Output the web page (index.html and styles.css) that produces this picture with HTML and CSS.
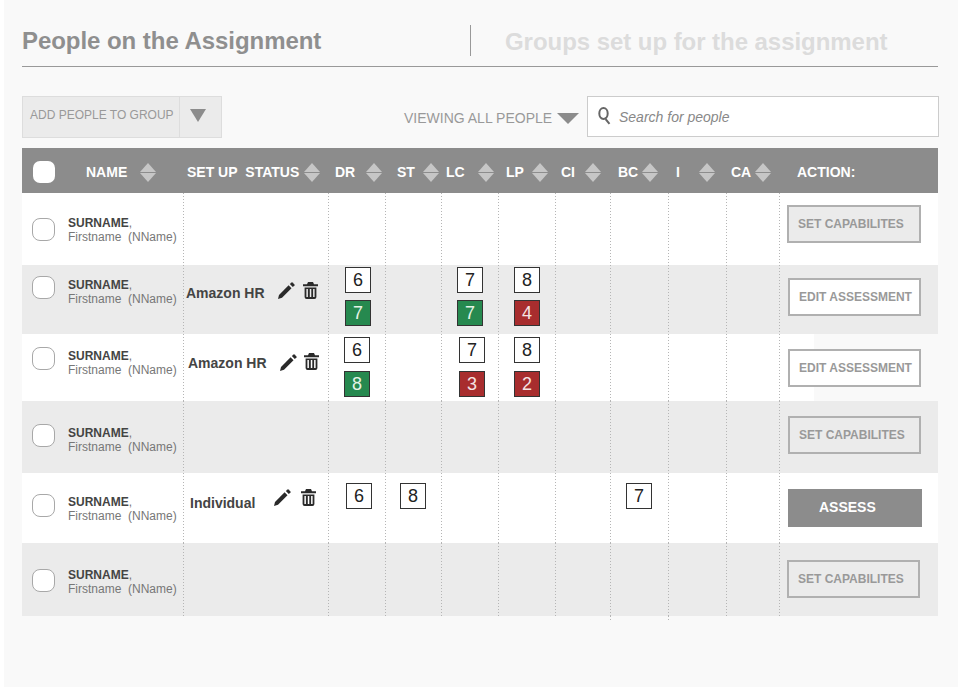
FILE: index.html
```html
<!DOCTYPE html>
<html lang="en">
<head>
    <meta charset="UTF-8">
    <title>People on the Assignment</title>
    <link rel="stylesheet" href="styles.css">
</head>
<body>
    <svg class="defs" width="0" height="0">
        <symbol id="pencil" viewBox="0 0 17 17">
            <path d="M0 17 1 12.9 10.6 3.3 13.5 6.2 4 15.8Z"/>
            <path d="M11.8 2.1 13.6.4Q14 .1 14.5.4L16.5 2.5Q16.8 3 16.5 3.4L14.8 5.1Z"/>
        </symbol>
        <symbol id="trash" viewBox="0 0 15 17">
            <path d="M5 0h5l1 2.2h4v2H0v-2h4Z"/>
            <path fill-rule="evenodd" d="M1.6 5.4h11.8V15q0 2-2 2H3.6q-2 0-2-2ZM3.4 7v8h1.5V7Zm3.4 0v8h1.5V7Zm3.3 0v8h1.5V7Z"/>
        </symbol>
    </svg>
    <div class="panel">
        <div class="tabs">
            <h1 class="tab tab-active">People on the Assignment</h1>
            <h1 class="tab tab-off">Groups set up for the assignment</h1>
        </div>

        <div class="toolbar">
            <div class="add-group">
                <span class="add-text">ADD PEOPLE TO GROUP</span>
                <span class="add-arrow"><i class="arrow-down"></i></span>
            </div>
            <div class="viewing">VIEWING ALL PEOPLE <i class="arrow-wide"></i></div>
            <div class="search">
                <svg class="search-icon" width="13" height="18" viewBox="0 0 13 18">
                    <ellipse cx="5.5" cy="6.5" rx="4.2" ry="5.4" fill="none" stroke="#666" stroke-width="2"/>
                    <path d="M7.5 12 11.5 16.8" stroke="#666" stroke-width="2" fill="none"/>
                </svg>
                <span class="search-text">Search for people</span>
            </div>
        </div>

        <div class="head grid">
            <div class="th th-name"><span class="head-check"></span><span class="th-label">NAME</span><i class="sort"></i></div>
            <div class="th th-status"><span class="th-label">SET UP&nbsp; STATUS</span><i class="sort"></i></div>
            <div class="th th-dr"><span class="th-label">DR</span><i class="sort"></i></div>
            <div class="th th-st"><span class="th-label">ST</span><i class="sort"></i></div>
            <div class="th th-lc"><span class="th-label">LC</span><i class="sort"></i></div>
            <div class="th th-lp"><span class="th-label">LP</span><i class="sort"></i></div>
            <div class="th th-ci"><span class="th-label">CI</span><i class="sort"></i></div>
            <div class="th th-bc"><span class="th-label">BC</span><i class="sort"></i></div>
            <div class="th th-i"><span class="th-label">I</span><i class="sort"></i></div>
            <div class="th th-ca"><span class="th-label">CA</span><i class="sort"></i></div>
            <div class="th th-action"><span class="th-label">ACTION:</span></div>
        </div>

        <!-- row 1 -->
        <div class="row row-1 grid">
            <div class="cell-name"><span class="check"></span><div class="person"><b>SURNAME</b>,<br>Firstname&nbsp; (NName)</div></div>
            <div class="cell"></div><div class="cell"></div><div class="cell"></div><div class="cell"></div><div class="cell"></div>
            <div class="cell"></div><div class="cell"></div><div class="cell"></div><div class="cell"></div>
            <div class="cell cell-action"><a class="btn btn-set">SET CAPABILITES</a></div>
        </div>

        <!-- row 2 -->
        <div class="row row-2 grid">
            <div class="cell-name"><span class="check"></span><div class="person"><b>SURNAME</b>,<br>Firstname&nbsp; (NName)</div></div>
            <div class="cell cell-status">
                <span class="group-name">Amazon HR</span>
                <svg class="icon-pencil"><use href="#pencil"/></svg>
                <svg class="icon-trash"><use href="#trash"/></svg>
            </div>
            <div class="cell scores pl-17"><span class="score">6</span><span class="score pass">7</span></div>
            <div class="cell"></div>
            <div class="cell scores pl-16"><span class="score">7</span><span class="score pass">7</span></div>
            <div class="cell scores pl-16"><span class="score">8</span><span class="score fail">4</span></div>
            <div class="cell"></div><div class="cell"></div><div class="cell"></div><div class="cell"></div>
            <div class="cell cell-action"><a class="btn btn-edit">EDIT ASSESSMENT</a></div>
        </div>

        <!-- row 3 -->
        <div class="row row-3 grid">
            <div class="cell-name"><span class="check"></span><div class="person"><b>SURNAME</b>,<br>Firstname&nbsp; (NName)</div></div>
            <div class="cell cell-status">
                <span class="group-name">Amazon HR</span>
                <svg class="icon-pencil"><use href="#pencil"/></svg>
                <svg class="icon-trash"><use href="#trash"/></svg>
            </div>
            <div class="cell scores pl-16"><span class="score">6</span><span class="score pass">8</span></div>
            <div class="cell"></div>
            <div class="cell scores pl-18"><span class="score">7</span><span class="score fail">3</span></div>
            <div class="cell scores pl-16"><span class="score">8</span><span class="score fail">2</span></div>
            <div class="cell"></div><div class="cell"></div><div class="cell"></div><div class="cell"></div>
            <div class="cell cell-action"><a class="btn btn-edit">EDIT ASSESSMENT</a></div>
        </div>

        <!-- row 4 -->
        <div class="row row-4 grid">
            <div class="cell-name"><span class="check"></span><div class="person"><b>SURNAME</b>,<br>Firstname&nbsp; (NName)</div></div>
            <div class="cell"></div><div class="cell"></div><div class="cell"></div><div class="cell"></div><div class="cell"></div>
            <div class="cell"></div><div class="cell"></div><div class="cell"></div><div class="cell"></div>
            <div class="cell cell-action"><a class="btn">SET CAPABILITES</a></div>
        </div>

        <!-- row 5 -->
        <div class="row row-5 grid">
            <div class="cell-name"><span class="check"></span><div class="person"><b>SURNAME</b>,<br>Firstname&nbsp; (NName)</div></div>
            <div class="cell cell-status">
                <span class="group-name">Individual</span>
                <svg class="icon-pencil"><use href="#pencil"/></svg>
                <svg class="icon-trash"><use href="#trash"/></svg>
            </div>
            <div class="cell scores pl-18"><span class="score">6</span></div>
            <div class="cell scores pl-15"><span class="score">8</span></div>
            <div class="cell"></div><div class="cell"></div><div class="cell"></div>
            <div class="cell scores pl-16"><span class="score">7</span></div>
            <div class="cell"></div><div class="cell"></div>
            <div class="cell cell-action"><a class="btn btn-assess">ASSESS</a></div>
        </div>

        <!-- row 6 -->
        <div class="row row-6 grid">
            <div class="cell-name"><span class="check"></span><div class="person"><b>SURNAME</b>,<br>Firstname&nbsp; (NName)</div></div>
            <div class="cell"></div><div class="cell"></div><div class="cell"></div><div class="cell"></div><div class="cell"></div>
            <div class="cell"></div><div class="cell cell-over"></div><div class="cell cell-over"></div><div class="cell"></div>
            <div class="cell cell-action"><a class="btn">SET CAPABILITES</a></div>
        </div>
    </div>
</body>
</html>
```

FILE: styles.css
```css
* {
    box-sizing: border-box;
}
body {
    margin: 0;
    background: #fff;
    font-family: "Liberation Sans", Arial, sans-serif;
}
.defs {
    display: block;
    height: 0;
}
.panel {
    width: 954px;
    height: 687px;
    margin-left: 4px;
    padding: 0 20px 0 18px;
    background: #f9f9f9;
    overflow: hidden;
}

/* tabs */
.tabs {
    display: flex;
    height: 67px;
    border-bottom: 1px solid #999;
}
.tab {
    margin: 0;
    font-size: 24px;
    line-height: 28px;
    font-weight: bold;
    letter-spacing: -0.05px;
}
.tab-active {
    width: 448px;
    padding-top: 27px;
    color: #8f8f8f;
}
.tab-off {
    position: relative;
    padding: 28px 0 0 35px;
    color: #dcdcdc;
}
.tab-off::before {
    content: "";
    position: absolute;
    left: 0;
    top: 25px;
    height: 31px;
    border-left: 1px solid #999;
}

/* toolbar */
.toolbar {
    display: flex;
    height: 81px;
    padding-top: 29px;
}
.add-group {
    flex: none;
    display: flex;
    width: 200px;
    height: 42px;
    background: #ebebeb;
    border: 1px solid #ddd;
}
.add-text {
    width: 156px;
    padding-left: 7px;
    font-size: 12px;
    line-height: 37px;
    color: #999;
    white-space: nowrap;
}
.add-arrow {
    flex: 1;
    padding: 12px 0 0 10px;
    border-left: 1px solid #ddd;
}
.arrow-down {
    display: block;
    width: 0;
    border-left: 8px solid transparent;
    border-right: 8px solid transparent;
    border-top: 13px solid #8c8c8c;
}
.viewing {
    flex: none;
    display: flex;
    align-items: flex-start;
    width: 365px;
    padding: 14px 0 0 182px;
    font-size: 14px;
    line-height: 16px;
    color: #999;
    white-space: pre;
}
.arrow-wide {
    width: 0;
    margin: 3px 0 0 1px;
    border-left: 11px solid transparent;
    border-right: 11px solid transparent;
    border-top: 11px solid #8c8c8c;
}
.search {
    flex: none;
    display: flex;
    align-items: flex-start;
    width: 352px;
    height: 41px;
    padding: 10px 0 0 10px;
    background: #fff;
    border: 1px solid #ccc;
}
.search-text {
    margin-left: 8px;
    font-size: 14px;
    line-height: 20px;
    font-style: italic;
    color: #888;
}

/* grid shared by header and rows */
.grid {
    display: grid;
    grid-template-columns: 161px 145px 57px 56px 57px 57px 55px 58px 58px 53px 159px;
}

/* table header */
.head {
    height: 45px;
    padding-top: 3px;
    background: #8c8c8c;
}
.th {
    display: flex;
    align-items: center;
    color: #fff;
    font-size: 14px;
    font-weight: bold;
    white-space: nowrap;
}
.head-check {
    width: 22px;
    height: 22px;
    margin-right: 31px;
    background: #fff;
    border-radius: 7px;
}
.sort {
    display: block;
    position: relative;
    width: 17px;
    height: 19px;
}
.sort::before,
.sort::after {
    content: "";
    position: absolute;
    left: 0;
    border-left: 8.5px solid transparent;
    border-right: 8.5px solid transparent;
}
.sort::before {
    top: 0;
    border-bottom: 9px solid #c6c6c6;
}
.sort::after {
    bottom: 0;
    border-top: 9px solid #c6c6c6;
}
.th-name { padding-left: 11px; }
.th-name .th-label { width: 54px; }
.th-status { padding-left: 4px; }
.th-status .th-label { width: 117px; }
.th-dr { padding-left: 7px; }
.th-dr .th-label { width: 31px; }
.th-st { padding-left: 12px; }
.th-st .th-label { width: 26px; }
.th-lc { padding-left: 5px; }
.th-lc .th-label { width: 32px; }
.th-lp { padding-left: 8px; }
.th-lp .th-label { width: 26px; }
.th-ci { padding-left: 6px; }
.th-ci .th-label { width: 24px; }
.th-bc { padding-left: 8px; }
.th-bc .th-label { width: 24px; }
.th-i { padding-left: 8px; }
.th-i .th-label { width: 23px; }
.th-ca { padding-left: 5px; }
.th-ca .th-label { width: 24px; }
.th-action { padding-left: 18px; }

/* rows */
.row-1 { height: 72px; background: #fff; }
.row-2 { height: 69px; background: #ebebeb; }
.row-3 { height: 67px; background: linear-gradient(to right, #fff 792px, #f9f9f9 792px); }
.row-4 { height: 72px; background: #ebebeb; }
.row-5 { height: 70px; background: #fff; }
.row-6 { height: 73px; background: #ebebeb; }

/* dotted column lines, one dot every 3px */
.cell {
    position: relative;
    background: linear-gradient(#b5b5b5 1px, transparent 1px) 0 0 / 1px 3px repeat-y;
}
.cell-over::after {
    content: "";
    position: absolute;
    left: 0;
    top: 100%;
    width: 1px;
    height: 6px;
    background: linear-gradient(#b5b5b5 1px, transparent 1px) 0 0 / 1px 3px repeat-y;
}
.cell-name {
    display: flex;
    align-items: flex-start;
    padding-left: 10px;
}
.check {
    flex: none;
    width: 23px;
    height: 23px;
    background: #fff;
    border: 1px solid #a8a8a8;
    border-radius: 8px;
}
.person {
    margin-left: 13px;
    font-size: 12px;
    line-height: 14px;
    color: #777;
    white-space: nowrap;
}
.person b {
    color: #444;
}
.row-1 .check { margin-top: 25px; }
.row-1 .person { margin-top: 23px; }
.row-2 .check { margin-top: 11px; }
.row-2 .person { margin-top: 13px; }
.row-3 .check { margin-top: 13px; }
.row-3 .person { margin-top: 15px; }
.row-4 .check { margin-top: 23px; }
.row-4 .person { margin-top: 25px; }
.row-5 .check { margin-top: 21px; }
.row-5 .person { margin-top: 22px; }
.row-6 .check { margin-top: 26px; }
.row-6 .person { margin-top: 25px; }

/* status column */
.cell-status {
    display: flex;
    align-items: flex-start;
}
.group-name {
    font-size: 14px;
    line-height: 16px;
    font-weight: bold;
    color: #444;
    white-space: nowrap;
}
.icon-pencil {
    flex: none;
    width: 17px;
    height: 17px;
    fill: #2a2a2a;
}
.icon-trash {
    flex: none;
    width: 15px;
    height: 17px;
    fill: #2a2a2a;
}
.row-2 .cell-status { padding-left: 3px; }
.row-2 .group-name { width: 92px; margin-top: 20px; }
.row-2 .icon-pencil { margin: 17px 8px 0 0; }
.row-2 .icon-trash { margin-top: 17px; }
.row-3 .cell-status { padding-left: 5px; }
.row-3 .group-name { width: 92px; margin-top: 21px; }
.row-3 .icon-pencil { margin: 20px 7px 0 0; }
.row-3 .icon-trash { margin-top: 19px; }
.row-5 .cell-status { padding-left: 7px; }
.row-5 .group-name { width: 84px; margin-top: 22px; }
.row-5 .icon-pencil { margin: 16px 10px 0 0; }
.row-5 .icon-trash { margin-top: 16px; }

/* score boxes */
.scores {
    display: flex;
    flex-direction: column;
    align-items: flex-start;
    gap: 7px;
}
.row-2 .scores { padding-top: 2px; }
.row-3 .scores { padding-top: 3px; gap: 8px; }
.row-5 .scores { padding-top: 10px; }
.pl-15 { padding-left: 15px; }
.pl-16 { padding-left: 16px; }
.pl-17 { padding-left: 17px; }
.pl-18 { padding-left: 18px; }
.score {
    display: block;
    width: 26px;
    height: 26px;
    background: #fff;
    border: 1px solid #333;
    font-size: 18px;
    line-height: 25px;
    text-align: center;
    color: #222;
}
.pass {
    background: #26894f;
    color: #e6f3e6;
}
.fail {
    background: #a82d2e;
    color: #f5e4e4;
}

/* action column */
.cell-action {
    padding-left: 9px;
}
.btn {
    display: block;
    width: 133px;
    height: 38px;
    padding-left: 9px;
    border: 2px solid #b0b0b0;
    font-size: 12px;
    line-height: 34px;
    font-weight: bold;
    color: #999;
    white-space: nowrap;
}
.btn-set {
    background: #ebebeb;
}
.btn-edit {
    background: #fff;
}
.btn-assess {
    width: 134px;
    padding-left: 31px;
    background: #8c8c8c;
    border: 0;
    font-size: 14px;
    line-height: 36px;
    color: #fff;
}
.row-1 .btn { width: 134px; margin: 12px 0 0 -1px; }
.row-2 .btn { margin-top: 13px; }
.row-3 .btn { margin-top: 15px; }
.row-4 .btn { margin-top: 15px; }
.row-5 .btn { margin-top: 16px; }
.row-6 .btn { margin-top: 17px; margin-left: -1px; }
```
